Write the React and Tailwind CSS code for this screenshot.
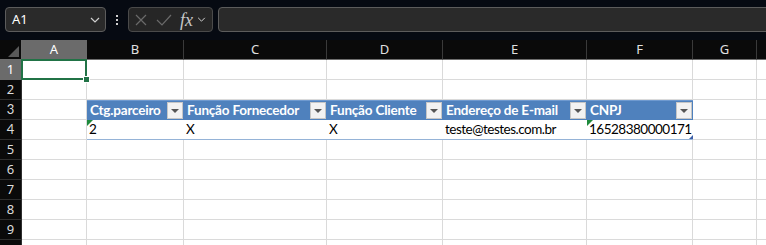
import React from 'react';

const cols = [
    { l: 'A', w: 'w-[65px]' },
    { l: 'B', w: 'w-[97px]' },
    { l: 'C', w: 'w-[143px]' },
    { l: 'D', w: 'w-[116px]' },
    { l: 'E', w: 'w-[144px]' },
    { l: 'F', w: 'w-[106px]' },
    { l: 'G', w: 'w-[64px]' },
    { l: '', w: 'w-[64px]' },
];

const headers = ['Ctg.parceiro', 'Função Fornecedor', 'Função Cliente', 'Endereço de E-mail', 'CNPJ'];
const values = ['2', 'X', 'X', 'teste@testes.com.br', '16528380000171'];

const Chevron = ({ className }) => (
    <svg viewBox="0 0 10 6" className={className} fill="none" stroke="currentColor" strokeWidth="1.2">
        <path d="M1 1l4 4 4-4" />
    </svg>
);

const FilterButton = () => (
    <div className="absolute right-[1px] top-[1px] w-[16px] h-[17px] bg-[#f2f2f2] border border-[#c6c6c6] flex items-center justify-center">
        <svg viewBox="0 0 8 4" className="w-[8px] h-[4px]">
            <path d="M0 0h8L4 4z" fill="#555" />
        </svg>
    </div>
);

const GreenTick = () => (
    <div className="absolute left-0 top-0 w-0 h-0 border-t-[6px] border-t-[#1e8a3c] border-r-[6px] border-r-transparent" />
);

const RowHeader = ({ n, active }) => (
    <div
        className={`w-[22px] h-[20px] flex-none flex items-center justify-center border-b border-r text-[13px] ${
            active ? 'bg-[#6b6b6b] text-white border-[#6b6b6b]' : 'bg-[#0a0a0a] text-[#dcdcdc] border-[#2e2e2e]'
        }`}
    >
        {n}
    </div>
);

const PlainRow = ({ n }) => (
    <div className="flex">
        <RowHeader n={n} />
        {cols.map((c, i) => (
            <div key={i} className={`${c.w} flex-none h-[20px] bg-white border-r border-b border-[#dadada]`} />
        ))}
    </div>
);

export default function App() {
    return (
        <div className="w-[766px] h-[245px] overflow-hidden bg-[#060a12] font-['Noto_Sans',sans-serif]">
            {/* Toolbar */}
            <div className="h-[40px] pt-[7px] flex items-start">
                <div className="ml-[5px] w-[101px] h-[25px] flex-none rounded-[4px] border border-[#5c5c5c] bg-[#2a2a2a] flex items-center justify-between pl-[6px] pr-[5px]">
                    <span className="text-[13px] text-white leading-none">A1</span>
                    <Chevron className="w-[10px] h-[6px] text-[#cfcfcf]" />
                </div>
                <div className="w-[22px] h-[25px] flex-none flex flex-col items-center justify-center gap-[2px]">
                    <div className="w-[2px] h-[2px] bg-[#d0d0d0]" />
                    <div className="w-[2px] h-[2px] bg-[#d0d0d0]" />
                    <div className="w-[2px] h-[2px] bg-[#d0d0d0]" />
                </div>
                <div className="w-[85px] h-[25px] flex-none rounded-[4px] border border-[#4a4a4a] bg-[#262626] flex items-center pl-[6px]">
                    <svg viewBox="0 0 12 12" className="w-[12px] h-[12px]" fill="none" stroke="#6a6a6a" strokeWidth="1.2">
                        <path d="M1 1l10 10M11 1L1 11" />
                    </svg>
                    <svg viewBox="0 0 16 12" className="ml-[9px] w-[16px] h-[12px]" fill="none" stroke="#6a6a6a" strokeWidth="1.2">
                        <path d="M1 6l5 5L15 1" />
                    </svg>
                    <span className="ml-[8px] text-[18px] italic text-[#c8c8c8] font-['Liberation_Serif',serif] leading-none">fx</span>
                    <Chevron className="ml-[4px] w-[9px] h-[5px] text-[#cfcfcf]" />
                </div>
                <div className="ml-[5px] w-[600px] h-[25px] flex-none rounded-[4px] border border-[#5c5c5c] bg-[#2a2a2a]" />
            </div>

            {/* Column headers */}
            <div className="flex">
                <div className="relative w-[22px] h-[20px] flex-none bg-[#0a0a0a] border-r border-b border-[#6e6e6e]">
                    <div className="absolute right-[2px] bottom-[2px] w-0 h-0 border-b-[11px] border-b-[#5a5a5a] border-l-[11px] border-l-transparent" />
                </div>
                {cols.map((c, i) => (
                    <div
                        key={i}
                        className={`${c.w} flex-none h-[20px] flex items-center justify-center text-[13px] border-r border-b ${
                            c.l === 'A'
                                ? 'bg-[#6b6b6b] text-white border-r-[#6b6b6b] border-b-[#9a9a9a]'
                                : 'bg-[#0a0a0a] text-[#e0e0e0] border-r-[#3a3a3a] border-b-[#6e6e6e]'
                        }`}
                    >
                        {c.l}
                    </div>
                ))}
            </div>

            {/* Row 1 with selection */}
            <div className="flex">
                <RowHeader n={1} active />
                {cols.map((c, i) => (
                    <div key={i} className={`relative ${c.w} flex-none h-[20px] bg-white border-r border-b border-[#dadada]`}>
                        {c.l === 'A' && (
                            <>
                                <div className="absolute z-10 -left-[1px] -top-[1px] -right-[1px] -bottom-[1px] border-2 border-[#217346]" />
                                <div className="absolute z-10 -right-[4px] -bottom-[4px] w-[7px] h-[7px] bg-[#217346] border border-white" />
                            </>
                        )}
                    </div>
                ))}
            </div>

            <PlainRow n={2} />

            {/* Row 3: table header */}
            <div className="flex font-['Lato',sans-serif]">
                <RowHeader n={3} />
                {cols.map((c, i) => {
                    const h = headers[i - 1];
                    if (h === undefined)
                        return <div key={i} className={`${c.w} flex-none h-[20px] bg-white border-r border-b border-[#dadada]`} />;
                    return (
                        <div
                            key={i}
                            className={`relative ${c.w} flex-none h-[20px] bg-[#4f81bd] border-t border-t-[#6f9ad0] flex items-center pl-[3px] text-[13.5px] tracking-[-0.2px] font-bold text-white leading-none`}
                        >
                            {h}
                            <FilterButton />
                        </div>
                    );
                })}
            </div>

            {/* Row 4: table data */}
            <div className="flex font-['Lato',sans-serif]">
                <RowHeader n={4} />
                {cols.map((c, i) => {
                    const v = values[i - 1];
                    if (v === undefined)
                        return <div key={i} className={`${c.w} flex-none h-[20px] bg-white border-b border-r border-[#dadada]`} />;
                    return (
                        <div
                            key={i}
                            className={`relative ${c.w} flex-none h-[20px] bg-white border-b border-[#95b3d7] flex items-center pl-[2px] text-[13.5px] tracking-[-0.5px] text-black leading-none`}
                        >
                            {(i === 1 || i === 5) && <GreenTick />}
                            {v}
                            {i === 5 && (
                                <div className="absolute right-0 bottom-0 w-0 h-0 border-b-[4px] border-b-[#3d5fa8] border-l-[4px] border-l-transparent" />
                            )}
                        </div>
                    );
                })}
            </div>

            {[5, 6, 7, 8, 9].map((n) => (
                <PlainRow key={n} n={n} />
            ))}
            <PlainRow n="" />
        </div>
    );
}
